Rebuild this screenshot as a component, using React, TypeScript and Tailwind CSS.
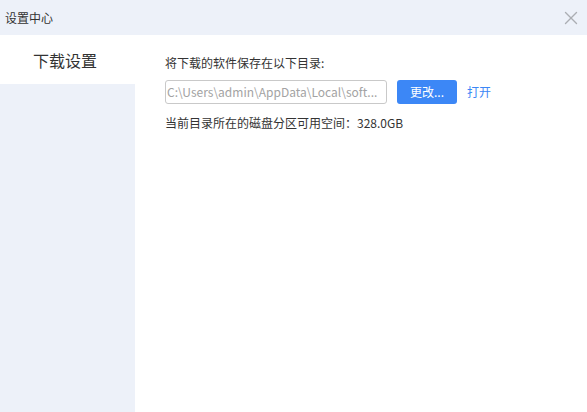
import React from 'react';
import { X } from 'lucide-react';

const FONT = '[font-family:"Microsoft_YaHei","Noto_Sans_CJK_SC",sans-serif]';

const NAV_ITEMS = ['下载设置'];

export default function App() {
  return (
    <div className={`w-[587px] h-[412px] flex flex-col bg-white text-[#333] ${FONT}`}>
      {/* Title bar */}
      <div className="h-[35px] shrink-0 flex items-center justify-between bg-[#edf1f9] pl-[5px] pr-[5px]">
        <span className="text-[12px] leading-none text-[#333]">设置中心</span>
        <X size={22} strokeWidth={1.5} className="text-[#abaeb3]" />
      </div>

      <div className="flex flex-1 min-h-0">
        {/* Sidebar */}
        <div className="w-[135px] shrink-0 bg-[#edf1f9] flex flex-col">
          {NAV_ITEMS.map((item) => (
            <div key={item} className="h-[49px] bg-white flex items-center justify-center pr-[5px] text-[16px] text-[#333]">
              {item}
            </div>
          ))}
        </div>

        {/* Content */}
        <div className="flex-1 pl-[30px] pt-[19px]">
          <div className="text-[12px] leading-[18px]">将下载的软件保存在以下目录:</div>
          <div className="flex items-center mt-[8px]">
            <div className="w-[222px] h-[24px] border border-[#c9c9c9] rounded-[3px] flex items-center pl-[1px] text-[12px] text-[#a3a3a3] overflow-hidden whitespace-nowrap">
              C:\Users\admin\AppData\Local\soft...
            </div>
            <button className="ml-[10px] w-[60px] h-[24px] rounded-[3px] bg-[#3c87f6] text-white text-[12px] flex items-center justify-center">
              更改...
            </button>
            <span className="ml-[10px] text-[12px] text-[#3c87f6]">打开</span>
          </div>
          <div className="text-[12px] leading-[18px] mt-[10px]">当前目录所在的磁盘分区可用空间：328.0GB</div>
        </div>
      </div>
    </div>
  );
}
